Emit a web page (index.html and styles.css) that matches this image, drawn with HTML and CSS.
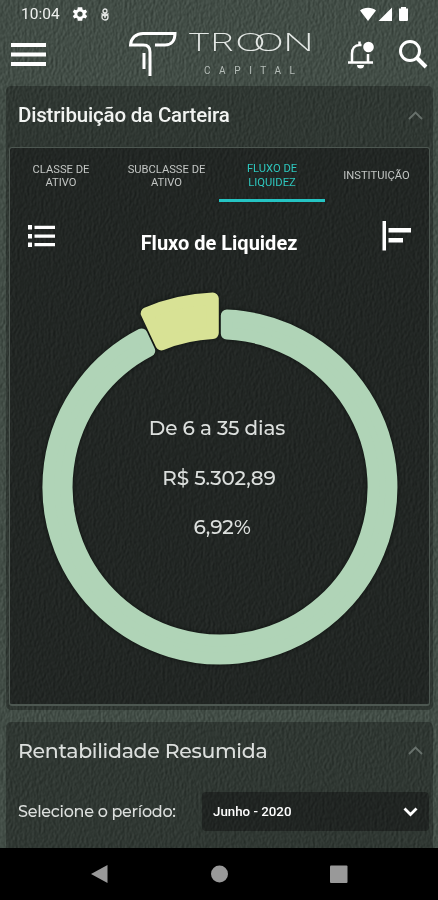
FILE: index.html
```html
<!DOCTYPE html>
<html lang="pt-BR">
<head>
    <meta charset="UTF-8">
    <meta name="viewport" content="width=device-width, initial-scale=1.0">
    <title>Troon Capital</title>
    <link rel="stylesheet" href="styles.css">
</head>
<body>
    <div class="app">
        <!-- leather grain behind the cards -->
        <svg class="grain" width="438" height="848">
            <filter id="leather" x="0" y="0" width="100%" height="100%" color-interpolation-filters="sRGB">
                <feTurbulence type="fractalNoise" baseFrequency="0.42 0.26" numOctaves="3" seed="4" result="noise"/>
                <feDiffuseLighting in="noise" surfaceScale="1.200" lighting-color="#fff">
                    <feDistantLight azimuth="200" elevation="30"/>
                </feDiffuseLighting>
            </filter>
            <rect width="438" height="848" filter="url(#leather)"/>
        </svg>

        <div class="status-bar">
            <span class="clock">10:04</span>
            <svg class="gear" width="18" height="18" viewBox="0 0 24 24"><path fill="#fff" fill-rule="evenodd" d="M19.4 13a7.500 7.500 0 0 0 0-2l2.100-1.600-2-3.500-2.500 1a7 7 0 0 0-1.700-1L15 3H9l-.4 2.900a7 7 0 0 0-1.700 1l-2.500-1-2 3.500L4.600 11a7.500 7.500 0 0 0 0 2l-2.200 1.600 2 3.500 2.500-1a7 7 0 0 0 1.700 1L9 21h6l.4-2.900a7 7 0 0 0 1.700-1l2.500 1 2-3.500zM12 15.500a3.500 3.500 0 1 1 0-7 3.500 3.500 0 0 1 0 7z"/></svg>
            <svg class="touch" width="10" height="13" viewBox="0 0 10 13" fill="none" stroke="#e4e7e5" stroke-width="1.300"><circle cx="5" cy="3" r="2"/><path d="M5 5v5M1.500 5.500l3.500 3M8.500 5.500l-3.500 3"/><circle cx="5" cy="9" r="3"/></svg>
            <svg class="signals" width="52" height="18" viewBox="0 0 52 18" fill="#fff"><path d="M1 5.500C5 1.700 13 1.700 17 5.500L9 16zM33 2.500V16H19.500zM42 3.500V2h5v1.500h2V15a1 1 0 0 1-1 1h-7a1 1 0 0 1-1-1V3.500z"/></svg>
        </div>

        <header class="top-bar">
            <svg class="menu-icon" width="35" height="25" viewBox="0 0 35 25"><path fill="#fff" d="M0 1h35v4H0zM0 10.500h35v4H0zM0 20h35v4H0z"/></svg>
            <svg class="logo" width="186" height="50" viewBox="0 0 186 50">
                <path fill="none" stroke="#fff" stroke-width="3" d="M28 17h10c6 0 10-4 10-11.500H16C9 5.500 4 10 3.500 17h13C21 17 23 20 23 24v24M17 25v16"/>
                <g class="logo-name">
                    <text x="60" y="23" textLength="24" lengthAdjust="spacingAndGlyphs">T</text>
                    <text x="83" y="23" textLength="24" lengthAdjust="spacingAndGlyphs">R</text>
                    <text x="108" y="23" textLength="31" lengthAdjust="spacingAndGlyphs">O</text>
                    <text x="126" y="23" textLength="31" lengthAdjust="spacingAndGlyphs">O</text>
                    <text x="156" y="23" textLength="31" lengthAdjust="spacingAndGlyphs">N</text>
                </g>
                <text class="logo-sub" x="77" y="46" textLength="91">CAPITAL</text>
            </svg>
            <svg class="bell-icon" width="27" height="31" viewBox="0 0 27 31"><path fill="none" stroke="#fff" stroke-width="2.500" d="M1 23.500h25M5 24v-9.500c0-5 3-8.500 7.500-8.500h2M21 15v9M12.500 2.500V6"/><path fill="#fff" d="M10 26h7a3.500 3.500 0 0 1-7 0z"/><circle cx="21.500" cy="8" r="5.300" fill="#fff"/></svg>
            <svg class="search-icon" width="31" height="31" viewBox="0 0 31 31" fill="none" stroke="#fff"><circle cx="12" cy="12" r="9.500" stroke-width="3"/><path stroke-width="4" d="M18.500 18.500l9.500 9.500"/></svg>
        </header>

        <section class="card portfolio">
            <div class="card-header">
                <h2>Distribuição da Carteira</h2>
                <svg class="chevron" width="15" height="9" viewBox="0 0 15 9"><path d="M1 8l6.500-6.500L14 8"/></svg>
            </div>
            <div class="panel">
                <nav class="tabs">
                    <span class="tab">CLASSE DE<br>ATIVO</span>
                    <span class="tab">SUBCLASSE DE<br>ATIVO</span>
                    <span class="tab active">FLUXO DE<br>LIQUIDEZ</span>
                    <span class="tab">INSTITUIÇÃO</span>
                </nav>
                <div class="chart-header">
                    <svg class="list-icon" width="28" height="23" viewBox="0 0 28 23" fill="#fff"><path d="M0 0h4v4.500H0zM6.500 .7h20.500v3.300H6.500zM0 9h4v4.500H0zM6.500 9.500h20.500v3.300H6.500zM0 17.500h4V22H0zM6.500 18h20.500v3.300H6.500z"/></svg>
                    <h3>Fluxo de Liquidez</h3>
                    <svg class="bars-icon" width="29" height="30" viewBox="0 0 29 30" fill="#fff"><path d="M0.500 0H4v29.500H0.500zM6.500 7H30v4.500H6.500zM6.500 17h14.500v4.500H6.500z"/></svg>
                </div>
                <div class="donut">
                    <svg width="400" height="400" viewBox="-200 -200 400 400">
                        <g class="slices">
                            <path class="slice green" d="M6.800 -171.400A171.500 171.500 0 1 1 -78.400 -152.600L-70.800 -136.200A153.500 153.500 0 1 0 6.800 -153.400Z"/>
                            <path class="slice yellow" d="M-73.300 -173.700A188.500 188.500 0 0 1 -7.200 -188.400L-7.200 -153.900A154 154 0 0 0 -58.600 -142.500Z"/>
                        </g>
                    </svg>
                    <div class="donut-label">
                        <span class="range">De 6 a 35 dias</span>
                        <span class="amount">R$ 5.302,89</span>
                        <span class="percent">6,92%</span>
                    </div>
                </div>
            </div>
        </section>

        <section class="card returns">
            <div class="card-header">
                <h2>Rentabilidade Resumida</h2>
                <svg class="chevron" width="15" height="9" viewBox="0 0 15 9"><path d="M1 8l6.500-6.500L14 8"/></svg>
            </div>
            <div class="period">
                <span class="period-label">Selecione o período:</span>
                <div class="select">
                    <span>Junho - 2020</span>
                    <svg width="15" height="10" viewBox="0 0 15 10"><path fill="none" stroke="#fff" stroke-width="2.800" d="M1.500 1.500l6 6 6-6"/></svg>
                </div>
            </div>
        </section>
    </div>

    <div class="nav-bar">
        <svg width="438" height="52" viewBox="0 0 438 52" fill="#999"><path d="M91 26l16.500-9v18z"/><circle cx="219.500" cy="26" r="8.500"/><rect x="330" y="17.500" width="17.500" height="17.500" rx="1"/></svg>
    </div>
</body>
</html>
```

FILE: styles.css
```css
* { box-sizing: border-box; }
body {
    font-family: Roboto, sans-serif;
    margin: 0;
    width: 438px;
    height: 900px;
    overflow: hidden;
    color: #fff;
    background-color: #000;
}
svg { display: block; flex-shrink: 0; }
h2, h3 { margin: 0; font-weight: 400; white-space: nowrap; }
.app {
    position: relative;
    z-index: 0;
    height: 848px;
    overflow: hidden;
    background-color: #424d46;
}
.grain {
    position: absolute;
    z-index: -1;
    top: 0;
    left: 0;
    mix-blend-mode: soft-light;
    opacity: 0.32;
}
.status-bar {
    display: flex;
    align-items: center;
    height: 28px;
    padding: 0 27px 0 21px;
}
.clock { width: 50px; font-size: 15.500px; color: #f0f2f0; }
.touch { margin-left: 11px; }
.signals { margin-left: auto; }
.top-bar {
    display: flex;
    height: 58px;
    padding-left: 11px;
}
.menu-icon { margin-top: 14px; }
.logo { margin-left: 81px; }
.logo-name {
    font-family: Inter, sans-serif;
    font-size: 24.500px;
    font-weight: 200;
    fill: #e4e8e5;
}
.logo-sub { font-size: 10px; fill: #b5bdb8; }
.bell-icon { margin: 11px 0 0 34px; }
.search-icon { margin: 11px 0 0 24px; }
.card {
    margin: 0 5px 0 6px;
    border-radius: 5px;
}
.card-header {
    display: flex;
    align-items: center;
    justify-content: space-between;
    padding: 0 10px 0 12px;
}
.chevron path { fill: none; stroke: #68716c; stroke-width: 1.800; }
.portfolio {
    height: 624px;
    padding: 0 3px;
    background-color: rgba(2, 2, 2, 0.29);
}
.portfolio .card-header { height: 61px; padding: 0 7px 3px 9px; }
.portfolio h2 { font-size: 20.500px; font-weight: 500; letter-spacing: -0.18px; color: #f2f4f2; }
.panel {
    height: 559px;
    border: 1px solid #4d5751;
    border-bottom-width: 2px;
    border-radius: 3px;
    background-color: rgba(2, 0, 2, 0.3);
}
.tabs {
    display: grid;
    grid-template-columns: 102px 109px 103px 1fr;
    height: 54px;
}
.tab {
    display: flex;
    align-items: center;
    justify-content: center;
    padding-top: 2px;
    font-size: 11.200px;
    line-height: 13.500px;
    text-align: center;
    color: #c2c5c3;
}
.active {
    margin: 0 -1px 0 -2px;
    padding-top: 4px;
    border-bottom: 3px solid #25c4c3;
    color: #2dc6bd;
}
.chart-header {
    display: flex;
    justify-content: space-between;
    height: 85px;
    padding: 19px 18px 0;
}
.list-icon { margin-top: 4px; }
.chart-header h3 { margin-top: 10px; font-size: 20px; font-weight: 700; line-height: 24px; }
.donut {
    display: grid;
    justify-items: center;
}
.donut svg, .donut-label { grid-area: 1 / 1; }
.slices { filter: drop-shadow(0 0 2px #0b100d); }
.slice { stroke-width: 12; stroke-linejoin: round; }
.green { fill: #b0d4b7; stroke: #b0d4b7; }
.yellow { fill: #d8e295; stroke: #d8e295; }
.donut-label {
    display: flex;
    flex-direction: column;
    align-items: center;
    gap: 25px;
    padding-top: 129px;
    padding-right: 5px;
    font-family: Montserrat, Inter, sans-serif;
    font-size: 20px;
    font-weight: 500;
    line-height: 24.500px;
    letter-spacing: -0.15px;
    color: #dcdfdd;
}
.amount { padding-left: 4px; }
.percent { padding-left: 10px; }
.returns {
    height: 140px;
    margin-top: 12px;
    background-color: rgba(2, 2, 2, 0.29);
}
.returns .card-header { height: 57px; }
.returns h2 {
    font-family: Montserrat, Inter, sans-serif;
    font-size: 20.500px;
    font-weight: 500;
    letter-spacing: -0.32px;
    color: #dcdfdd;
}
.period {
    display: flex;
    align-items: center;
    justify-content: space-between;
    height: 39px;
    margin-top: 13px;
    padding: 0 4px 0 12px;
}
.period-label {
    font-family: Montserrat, Inter, sans-serif;
    font-size: 16px;
    font-weight: 500;
    letter-spacing: -0.3px;
    white-space: nowrap;
    color: #dcdfdd;
}
.select {
    display: flex;
    align-items: center;
    justify-content: space-between;
    width: 227px;
    height: 39px;
    padding: 0 11px;
    border-radius: 4px;
    font-size: 13.300px;
    font-weight: 500;
    background-color: rgba(2, 0, 2, 0.33);
}
.nav-bar { height: 52px; background-color: #000; }
```
